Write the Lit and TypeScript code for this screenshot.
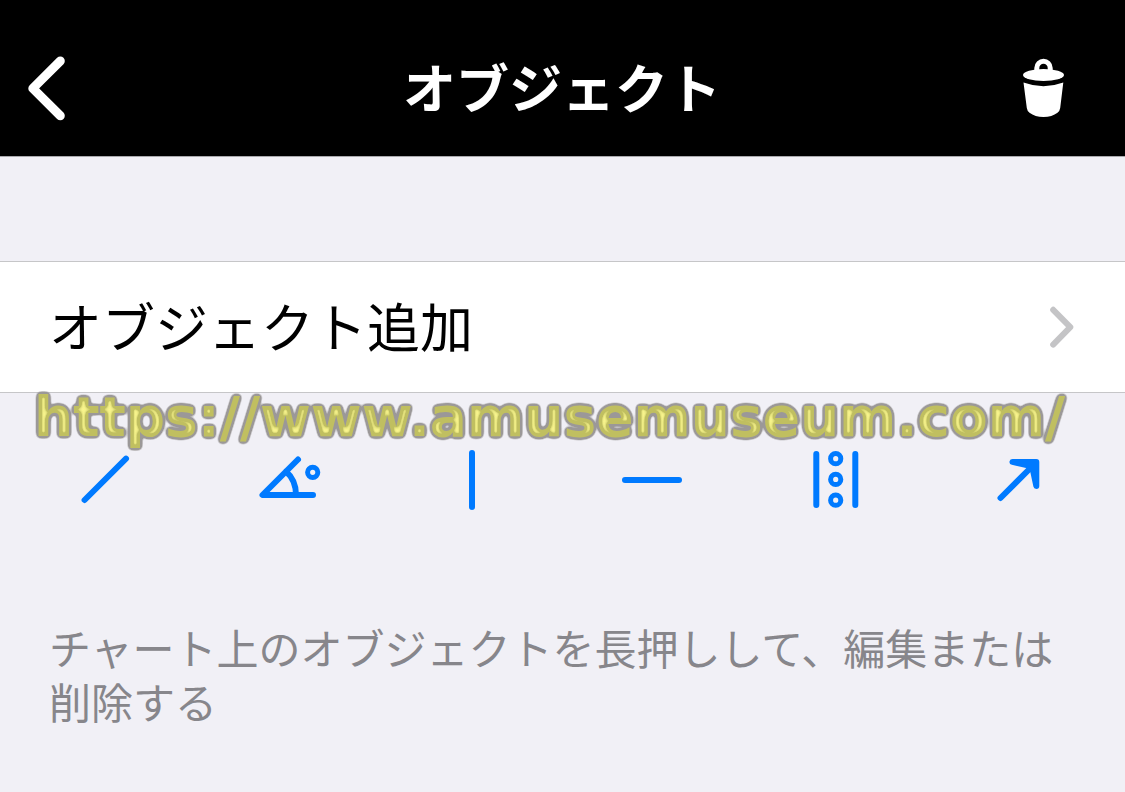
import { LitElement, html, css, svg } from "lit";
import { customElement } from "lit/decorators.js";

const tools = [
  { label: "トレンドライン", shape: svg`<path d="M9.6 50 51 8.7" />` },
  {
    label: "角度",
    shape: svg`<path d="M40 9.5 4.5 45H55M28 21.5Q38 30 38 45" /><circle cx="54.7" cy="22.3" r="5.1" />`,
  },
  { label: "垂直線", shape: svg`<path d="M31 3V57" />` },
  { label: "水平線", shape: svg`<path d="M1 30H55" />` },
  {
    label: "チャネル",
    shape: svg`<path d="M9.3 4V55M48.3 4V55" /><circle cx="28.7" cy="8.7" r="5.1" /><circle cx="28.7" cy="29.4" r="5.1" /><circle cx="28.7" cy="50.2" r="5.1" />`,
  },
  {
    label: "矢印",
    shape: svg`<path d="M10.5 48 42 16.5" /><path class="solid" d="M22.5 11.9H46.3V36L42.8 19.5 39 15.6Z" />`,
  },
];

@customElement("app-root")
export class AppRoot extends LitElement {
  static styles = css`
    :host {
      display: block;
      position: relative;
      min-height: 100vh;
      background: #f1f0f6;
      color: #000;
      font-family: "Noto Sans CJK JP", sans-serif;
    }
    button {
      margin: 0;
      padding: 0;
      border: 0;
      background: none;
      color: inherit;
      font: inherit;
      cursor: pointer;
    }
    svg {
      display: block;
      overflow: visible;
      fill: none;
      stroke: currentColor;
      stroke-linecap: round;
      stroke-linejoin: round;
    }
    .bar {
      display: grid;
      grid-template-columns: 1fr auto 1fr;
      align-items: center;
      padding: 41px 56px 25px 24px;
      border-bottom: 1px solid #a9a9ad;
      background: #000;
      color: #fff;
    }
    .title {
      margin: 0;
      padding-left: 31px;
      font-size: 53px;
      line-height: 90px;
      font-weight: 700;
    }
    .back {
      justify-self: start;
    }
    .back svg {
      stroke-width: 9;
    }
    .trash {
      justify-self: end;
    }
    .trash svg {
      stroke: none;
      fill: currentColor;
    }
    .trash .handle {
      fill: none;
      stroke: currentColor;
      stroke-width: 5;
    }
    .row {
      display: flex;
      justify-content: space-between;
      align-items: center;
      box-sizing: border-box;
      width: 100%;
      margin-top: 104px;
      padding: 0 50px 0 49px;
      border-top: 1px solid #c6c6c8;
      border-bottom: 1px solid #c6c6c8;
      background: #fff;
      font-size: 53px;
      text-align: left;
    }
    .label {
      padding: 23px 0 27px;
      line-height: 80px;
    }
    .row svg {
      color: #c4c4c6;
      stroke-width: 6;
    }
    .tools {
      display: grid;
      grid-template-columns: repeat(6, 1fr);
      padding: 57px 14px 0;
      color: #007aff;
    }
    .tool {
      display: flex;
      justify-content: center;
    }
    .tool svg {
      stroke-width: 6;
    }
    .tool circle {
      stroke-width: 5;
    }
    .tool .solid {
      fill: currentColor;
    }
    .hint {
      margin: 0;
      padding: 110px 50px 50px 49px;
      color: #87868b;
      font-size: 42px;
      line-height: 54px;
    }
    .mark {
      position: absolute;
      top: 385px;
      left: 34px;
      color: #c0bf60;
      font: 700 55px/64px "DejaVu Sans", Verdana, sans-serif;
      white-space: nowrap;
      text-decoration: none;
      filter: url(#shine);
    }
    .defs {
      position: absolute;
    }
  `;

  render() {
    return html`
      <header class="bar">
        <button class="back" aria-label="戻る">
          <svg width="44" height="64" viewBox="24 54 44 64">
            <path d="M60.3 61 32.8 88.4 60.3 115.8" />
          </svg>
        </button>
        <h1 class="title">オブジェクト</h1>
        <button class="trash" aria-label="削除">
          <svg width="50" height="60" viewBox="1019 56 50 60">
            <path class="handle" d="M1036.8 71V68A6.7 6.7 0 0 1 1050.2 68V71" />
            <ellipse cx="1043.5" cy="75" rx="20.5" ry="6.1" />
            <path d="M1023.5 82.6Q1043.5 90 1063.3 82.6L1060.2 108Q1059.8 111 1057.5 112.8 1052 117 1043.5 117 1035 117 1029.5 112.8 1027.2 111 1026.8 108Z" />
          </svg>
        </button>
      </header>
      <main>
        <button class="row">
          <span class="label">オブジェクト追加</span>
          <svg width="26" height="42" viewBox="1049 306 26 42">
            <path d="M1053.2 309.8 1070.3 327.2 1053.2 344.6" />
          </svg>
        </button>
        <div class="tools">
          ${tools.map(
            (t) => html`<button class="tool" aria-label=${t.label}>
              <svg width="60" height="60" viewBox="0 0 60 60">${t.shape}</svg>
            </button>`
          )}
        </div>
        <p class="hint">チャート上のオブジェクトを長押しして、編集または削除する</p>
      </main>
      <svg class="defs" width="0" height="0" aria-hidden="true">
        <filter id="shine" x="-2%" y="-10%" width="104%" height="120%" color-interpolation-filters="sRGB">
          <feGaussianBlur in="SourceAlpha" stdDeviation="2" result="soft" />
          <feComponentTransfer in="soft" result="wide">
            <feFuncA type="linear" slope="8" intercept="-0.4" />
          </feComponentTransfer>
          <feFlood flood-color="#9b9898" />
          <feComposite in2="wide" operator="in" result="rim" />
          <feComponentTransfer in="soft" result="core">
            <feFuncA type="linear" slope="12" intercept="-11" />
          </feComponentTransfer>
          <feFlood flood-color="#faf68e" />
          <feComposite in2="core" operator="in" result="glow" />
          <feMerge>
            <feMergeNode in="rim" />
            <feMergeNode in="SourceGraphic" />
            <feMergeNode in="glow" />
          </feMerge>
        </filter>
      </svg>
      <a class="mark" href="https://www.amusemuseum.com/">https://www.amusemuseum.com/</a>
    `;
  }
}
